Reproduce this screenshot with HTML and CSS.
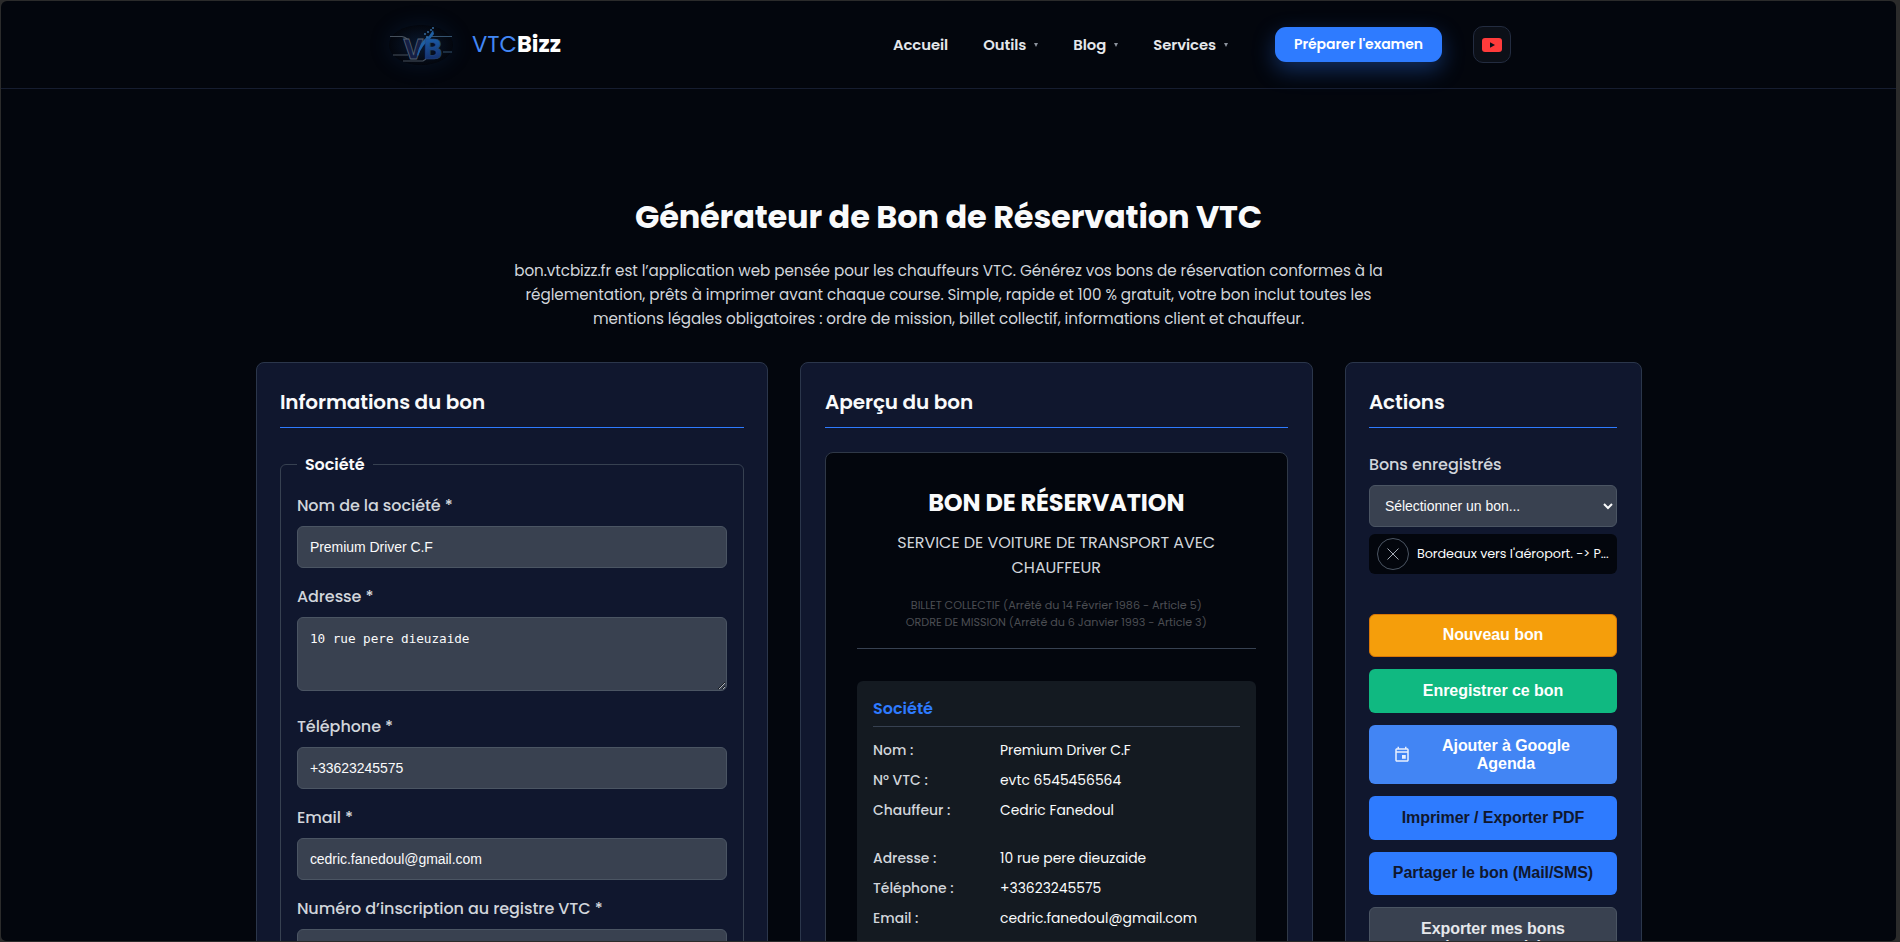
FILE: index.html
```html
<!DOCTYPE html>
<html lang="fr">
<head>
<meta charset="UTF-8">
<meta name="viewport" content="width=device-width, initial-scale=1">
<title>VTCBizz - Générateur de Bon de Réservation VTC</title>
<link rel="stylesheet" href="styles.css">
</head>
<body>
<div class="page">
    <header class="header">
        <a class="logo" href="#">
            <svg class="logo-mark" width="64" height="40" viewBox="0 0 64 40">
                <defs>
                    <linearGradient id="metal" x1="0" y1="0" x2="0" y2="1">
                        <stop offset="0" stop-color="#1b66b5"/>
                        <stop offset="1" stop-color="#13235c"/>
                    </linearGradient>
                </defs>
                <g fill="none" stroke="#46505c" stroke-width="1.2">
                    <path d="M1 11.500h12q4 .5 6 4"/>
                    <path d="M41 11.500h22" stroke="#35536f"/>
                    <path d="M4 30h15"/>
                    <path d="M54 27h9" stroke="#35536f"/>
                    <path d="M14 36h20l3-2"/>
                </g>
                <text x="14" y="34" class="logo-letter" fill="#141f45" stroke="#566271" stroke-width=".8">V</text>
                <path d="M28 30Q31 17 38 12l2-1 4-6 1 4-4 5Q33 20 29 31z" fill="#1f5fa3"/>
                <path d="M35 9h2M38 7h2M41 5h2M37 12h2M43 3h2" stroke="#35699c" stroke-width="1.500"/>
                <text x="35" y="34" class="logo-letter" fill="url(#metal)" stroke="#27497c" stroke-width=".6">B</text>
            </svg>
            <span class="logo-text"><span class="logo-vtc">VTC</span>Bizz</span>
        </a>
        <nav class="nav">
            <a href="#" class="nav-link">Accueil</a>
            <a href="#" class="nav-link">Outils<i class="caret"></i></a>
            <a href="#" class="nav-link">Blog<i class="caret"></i></a>
            <a href="#" class="nav-link">Services<i class="caret"></i></a>
            <a href="#" class="nav-cta">Préparer l'examen</a>
            <a href="#" class="nav-yt">
                <svg width="20" height="14" viewBox="0 0 20 14">
                    <rect width="20" height="14" rx="3" fill="#ff3b3b"/>
                    <path d="M8 4.200v5.600L13 7z" fill="#0b0f18"/>
                </svg>
            </a>
        </nav>
    </header>

    <main class="main">
        <h1 class="title">Générateur de Bon de Réservation VTC</h1>
        <p class="intro">
            bon.vtcbizz.fr est l’application web pensée pour les chauffeurs VTC. Générez vos bons de réservation conformes à la<br>
            réglementation, prêts à imprimer avant chaque course. Simple, rapide et 100 % gratuit, votre bon inclut toutes les<br>
            mentions légales obligatoires : ordre de mission, billet collectif, informations client et chauffeur.
        </p>

        <div class="columns">
            <section class="panel">
                <h2 class="panel-title">Informations du bon</h2>
                <fieldset class="group">
                    <legend>Société</legend>
                    <div class="field">
                        <label for="nom">Nom de la société *</label>
                        <input type="text" id="nom" value="Premium Driver C.F">
                    </div>
                    <div class="field field-area">
                        <label for="adresse">Adresse *</label>
                        <textarea id="adresse" spellcheck="false">10 rue pere dieuzaide</textarea>
                    </div>
                    <div class="field">
                        <label for="tel">Téléphone *</label>
                        <input type="tel" id="tel" value="+33623245575">
                    </div>
                    <div class="field">
                        <label for="email">Email *</label>
                        <input type="email" id="email" value="cedric.fanedoul@gmail.com">
                    </div>
                    <div class="field">
                        <label for="evtc">Numéro d’inscription au registre VTC *</label>
                        <input type="text" id="evtc">
                    </div>
                </fieldset>
            </section>

            <section class="panel panel-preview">
                <h2 class="panel-title">Aperçu du bon</h2>
                <div class="preview">
                    <div class="preview-head">
                        <h3>BON DE RÉSERVATION</h3>
                        <p class="service">SERVICE DE VOITURE DE TRANSPORT AVEC CHAUFFEUR</p>
                        <p class="legal">BILLET COLLECTIF (Arrêté du 14 Février 1986 - Article 5)<br>ORDRE DE MISSION (Arrêté du 6 Janvier 1993 - Article 3)</p>
                    </div>
                    <div class="block">
                        <h4>Société</h4>
                        <dl class="rows">
                            <dt>Nom :</dt><dd>Premium Driver C.F</dd>
                            <dt>N° VTC :</dt><dd>evtc 6545456564</dd>
                            <dt>Chauffeur :</dt><dd>Cedric Fanedoul</dd>
                        </dl>
                        <dl class="rows">
                            <dt>Adresse :</dt><dd>10 rue pere dieuzaide</dd>
                            <dt>Téléphone :</dt><dd>+33623245575</dd>
                            <dt>Email :</dt><dd>cedric.fanedoul@gmail.com</dd>
                        </dl>
                    </div>
                </div>
            </section>

            <section class="panel">
                <h2 class="panel-title">Actions</h2>
                <div class="saved">
                    <label for="bons">Bons enregistrés</label>
                    <select id="bons"><option>Sélectionner un bon...</option></select>
                    <div class="saved-item">
                        <button class="remove" type="button">
                            <svg width="12" height="12" viewBox="0 0 12 12"><path d="M.5.5l11 11M11.500.500l-11 11" stroke="#a3aab5" fill="none"/></svg>
                        </button>
                        <span class="saved-name">Bordeaux vers l'aéroport. -&gt; P...</span>
                    </div>
                </div>
                <div class="actions">
                    <button class="btn btn-new">Nouveau bon</button>
                    <button class="btn btn-save">Enregistrer ce bon</button>
                    <button class="btn btn-google">
                        <svg width="18" height="18" viewBox="0 0 24 24" fill="#e8f0fe"><path d="M19 3h-1V1h-2v2H8V1H6v2H5c-1.110 0-1.990.9-1.990 2L3 19c0 1.100.89 2 2 2h14c1.100 0 2-.9 2-2V5c0-1.100-.9-2-2-2zm0 16H5V9h14v10zm0-12H5V5h14v2zm-7 5h5v5h-5z"/></svg>
                        <span>Ajouter à Google Agenda</span>
                    </button>
                    <button class="btn btn-primary">Imprimer / Exporter PDF</button>
                    <button class="btn btn-primary btn-share">Partager le bon (Mail/SMS)</button>
                    <button class="btn btn-grey">Exporter mes bons<br>(sauvegarde)</button>
                </div>
            </section>
        </div>
    </main>
</div>
</body>
</html>
```
FILE: styles.css
```css
* { box-sizing: border-box; }
html { background: #2b2b2b; overflow: hidden; }
body {
    margin: 0;
    height: 942px;
    padding: 1px 4px 1px 1px;
    overflow: hidden;
    color: #f9fafb;
    font-family: Poppins, "Liberation Sans", sans-serif;
    font-size: 16px;
    line-height: 1.6;
}
.page {
    height: 940px;
    overflow: hidden;
    background: #03060d;
    border-radius: 6px 6px 5px 5px;
}
a { color: inherit; text-decoration: none; }
h1, h2, h3, h4, p, dl, dd { margin: 0; }

/* header */
.header {
    display: flex;
    align-items: center;
    justify-content: space-between;
    height: 88px;
    padding: 0 385px 0 388px;
    border-bottom: 1px solid #161d30;
}
.logo { display: flex; align-items: center; gap: 19px; }
.logo-mark {
    border-radius: 50%;
    background: radial-gradient(ellipse, rgba(25, 75, 140, .28), transparent 72%);
    box-shadow: 0 0 22px rgba(25, 75, 140, .2);
    overflow: visible;
}
.logo-letter { font: 800 27px Inter, sans-serif; }
.logo-text { margin-top: -1px; font-size: 22.6px; font-weight: 700; line-height: 1; color: #fff; }
.logo-vtc { color: #4287f5; font-weight: 400; }
.nav { display: flex; align-items: center; font-size: 14.8px; font-weight: 600; color: #e5e7eb; }
.nav-link { display: flex; align-items: center; margin: 1px 35px 0 0; letter-spacing: -.05px; }
.caret {
    margin-left: 8px;
    border: 2.5px solid transparent;
    border-top: 4px solid #8b919c;
    border-bottom: 0;
}
.nav-cta {
    width: 167px;
    height: 35px;
    margin: 0 31px 0 12px;
    border-radius: 11px;
    background: #2e7bff;
    box-shadow: 0 8px 22px rgba(46, 123, 255, .35);
    color: #fff;
    font-size: 14px;
    font-weight: 600;
    letter-spacing: -.05px;
    line-height: 35px;
    text-align: center;
}
.nav-yt {
    display: flex;
    align-items: center;
    justify-content: center;
    width: 38px;
    height: 37px;
    border: 1px solid #232c40;
    border-radius: 10px;
    background: #0c1018;
}

/* intro */
.main { width: 1386px; margin: 0 auto; padding-top: 102px; text-align: center; }
.title { font-size: 32px; font-weight: 700; line-height: 51px; letter-spacing: -.17px; white-space: nowrap; }
.intro {
    margin: 17px 0 31px;
    color: #d1d5db;
    font-size: 15.2px;
    line-height: 24px;
    letter-spacing: -.07px;
    white-space: nowrap;
}

.columns {
    display: grid;
    grid-template-columns: 1fr 1fr 297px;
    gap: 32px;
    text-align: left;
}
.panel {
    min-width: 0;
    padding: 24px 23.4px;
    border: 1px solid #2b364b;
    border-radius: 8px;
    background: #10172e;
}
.panel-preview { padding: 24px; }
.panel-title {
    height: 41px;
    margin-bottom: 24px;
    border-bottom: 1px solid #2e7bff;
    font-size: 20px;
    font-weight: 600;
    line-height: 31px;
    letter-spacing: -.1px;
}

/* form */
.group { margin: 0; padding: 0 16px 16px; border: 1px solid #374151; border-radius: 6px; }
.group legend { padding: 0 8px; font-weight: 600; line-height: 25px; letter-spacing: -.05px; }
.field { margin: 16px 0; }
.field + .field { margin-top: 0; }
.field-area { margin-bottom: 23px; }
label {
    display: block;
    margin-bottom: 8px;
    color: #d1d5db;
    font-weight: 500;
    line-height: 25px;
    letter-spacing: -.07px;
}
input, textarea, select {
    display: block;
    width: 100%;
    height: 42px;
    padding: 0 12px;
    border: 1px solid #4b5563;
    border-radius: 6px;
    background: #394150;
    color: #f9fafb;
    font: 14px "Liberation Sans", Arial, sans-serif;
    letter-spacing: -.04px;
}
textarea { height: 74px; padding: 13px 12px; font: 12.7px "DejaVu Sans Mono", monospace; }

/* preview */
.preview {
    height: 700px;
    padding: 32px 31px 0;
    border: 1px solid #2f3847;
    border-radius: 8px;
    background: #03060d;
}
.preview-head { height: 164px; margin-bottom: 32px; border-bottom: 1px solid #374151; text-align: center; }
.preview-head h3 { font-size: 24px; font-weight: 700; line-height: 36px; letter-spacing: -.14px; }
.service { margin-top: 9px; padding: 0 30px; line-height: 25px; letter-spacing: -.06px; color: #d1d5db; }
.legal { margin-top: 17px; font-size: 11.2px; line-height: 17px; letter-spacing: -.04px; color: #4b4d52; }
.block { height: 400px; padding: 16px; border-radius: 6px; background: #141a21; }
.block h4 {
    height: 30px;
    margin-bottom: 8px;
    border-bottom: 1px solid #374151;
    color: #2e7bff;
    font-size: 16px;
    font-weight: 600;
    line-height: 23px;
}
.rows { display: grid; grid-template-columns: 127px 1fr; margin-bottom: 18px; font-size: 13.9px; line-height: 30px; }
.rows dt { font-weight: 500; color: #d1d5db; }

/* actions */
.saved { margin-bottom: 40px; }
select { padding: 0 11px; }
.saved-item {
    display: flex;
    align-items: center;
    height: 40px;
    margin-top: 7px;
    padding: 0 8px;
    border-radius: 6px;
    background: #03060d;
    font-size: 12.8px;
    letter-spacing: -.06px;
}
.remove {
    display: flex;
    flex: none;
    align-items: center;
    justify-content: center;
    width: 32px;
    height: 32px;
    margin-right: 8px;
    padding: 0;
    border: 1px solid #4b5563;
    border-radius: 50%;
    background: none;
}
.saved-name { white-space: nowrap; }
.actions { display: flex; flex-direction: column; gap: 12px; }
.btn {
    display: flex;
    align-items: center;
    justify-content: center;
    height: 44px;
    padding: 0 16px 1px;
    border: 0;
    border-radius: 6px;
    color: #fff;
    font: bold 16px/18px "Liberation Sans", Arial, sans-serif;
    letter-spacing: -.06px;
}
.btn-new { height: 43px; border: 1px solid #d97706; background: #f59e0b; }
.btn-save { background: #10b981; }
.btn-google { height: 59px; padding: 1px 28px 0 24px; background: #4285f4; }
.btn-google svg { flex: none; }
.btn-google span { flex: 1; padding-left: 12px; }
.btn-primary { background: #2e7bff; color: #10172e; }
.btn-share { height: 43px; }
.btn-grey { height: 62px; border: 1px solid #4b5563; background: #394150; color: #e5e7eb; }
```
